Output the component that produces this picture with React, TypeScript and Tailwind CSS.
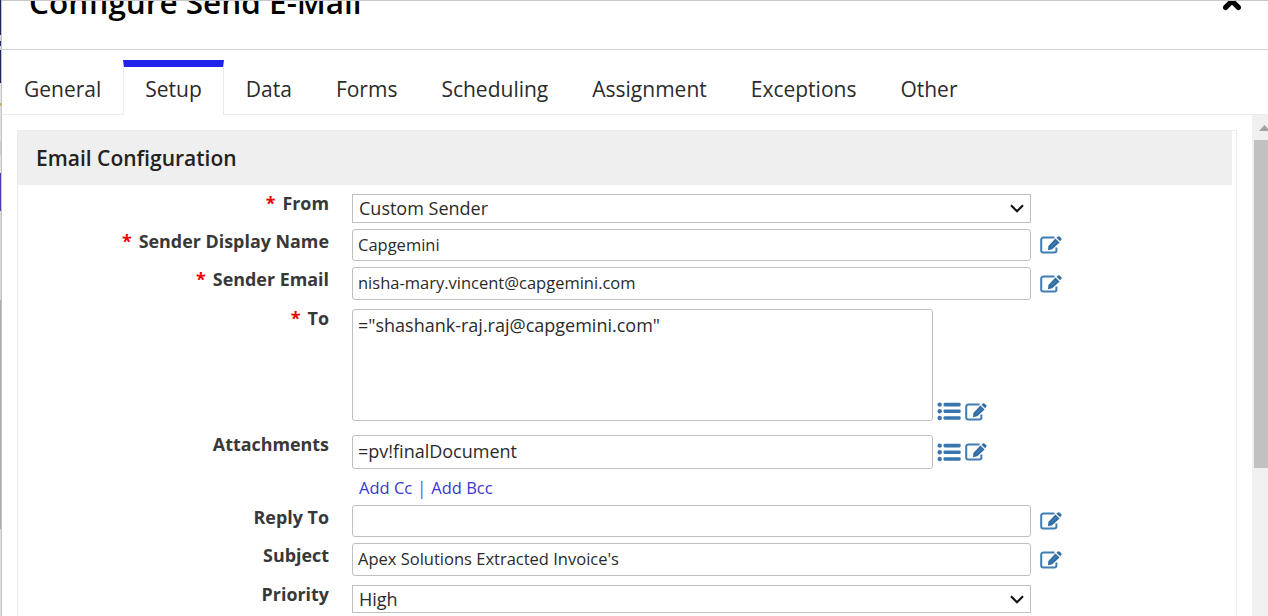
import { useState } from "react";
import type { ReactNode } from "react";
import { clsx } from "clsx";

const TABS = [
  "General",
  "Setup",
  "Data",
  "Forms",
  "Scheduling",
  "Assignment",
  "Exceptions",
  "Other",
];

function EditIcon() {
  return (
    <svg width="22" height="18" viewBox="0 0 22 18" fill="none" className="shrink-0">
      <path
        d="M14.5 1.6H3.2A2 2 0 0 0 1.2 3.6V14.6A2 2 0 0 0 3.2 16.6H14.4A2 2 0 0 0 16.4 14.6V11.5"
        stroke="#3f7db3"
        strokeWidth="2"
      />
      <path d="M15.4 2.6L19.6 6.4L12.2 13.2L8 14.2L8.4 9.9Z" fill="#2f6da3" />
      <path d="M16.4 1.8L18 0.4Q18.8 0 19.4 0.5L21.4 2.2Q21.9 2.8 21.4 3.6L20.3 5.3Z" fill="#2f6da3" />
      <path d="M11.2 10.4L16.4 5.4" stroke="#6b9cc6" strokeWidth="0.7" />
    </svg>
  );
}

function ListIcon() {
  return (
    <svg width="24" height="19" viewBox="0 0 24 19" fill="#3a76ae" className="shrink-0">
      {[2.6, 9.3, 16].map((y) => (
        <g key={y}>
          <circle cx="2.7" cy={y} r="2.2" />
          <rect x="6.5" y={y - 1.8} width="17.2" height="3.6" rx="1.3" />
        </g>
      ))}
    </svg>
  );
}

function Row({
  label,
  required,
  className,
  children,
}: {
  label: string;
  required?: boolean;
  className?: string;
  children: ReactNode;
}) {
  return (
    <div className={clsx("flex items-start", className)}>
      <div className="w-[311px] shrink-0 text-right text-[17.9px] leading-6 font-bold text-[#383838]">
        {required ? <span className="mr-[7px] text-[#f00000]">*</span> : null}
        {label}
      </div>
      <div className="ml-[23px]">{children}</div>
    </div>
  );
}

function SelectBox({ value, className }: { value: string; className?: string }) {
  return (
    <div
      className={clsx(
        "mt-[3px] flex w-[679px] items-center justify-between border border-[#bfbfbf] pr-[6px] pl-[6px] text-[18px] text-[#2b2b2b]",
        className,
      )}
    >
      <span>{value}</span>
      <svg width="14" height="9" viewBox="0 0 14 9" fill="none">
        <path d="M1 1.2L7 7.2L13 1.2" stroke="#111" strokeWidth="2.1" />
      </svg>
    </div>
  );
}

function TextField({
  defaultValue,
  className,
  icons,
}: {
  defaultValue?: string;
  className?: string;
  icons?: ReactNode;
}) {
  return (
    <div className="flex items-center">
      <input
        type="text"
        defaultValue={defaultValue}
        className={clsx(
          "rounded-[3px] border border-[#bfbfbf] bg-white pl-[5px] text-[#2b2b2b] outline-none",
          className,
        )}
      />
      {icons}
    </div>
  );
}

function PickerIcons() {
  return (
    <div className="ml-1 flex items-center gap-1">
      <ListIcon />
      <EditIcon />
    </div>
  );
}

function FieldEdit() {
  return (
    <div className="ml-[9px]">
      <EditIcon />
    </div>
  );
}

// Sliver of the page that stays visible behind the dialog
function PageEdge() {
  return (
    <div className="flex w-px shrink-0 flex-col">
      <div className="h-[35px] bg-[#20235e]" />
      <div className="h-[6px] bg-[#cfd3e0]" />
      <div className="h-[5px] bg-[#20306e]" />
      <div className="h-[4px] bg-[#d5d5dc]" />
      <div className="h-[33px] bg-[#20235e]" />
      <div className="h-[20px] bg-[#e4e4e4]" />
      <div className="h-[3px] bg-[#c9a84a]" />
      <div className="h-[35px] bg-[#e0e0e0]" />
      <div className="h-[14px] bg-[#cccccc]" />
      <div className="h-[18px] bg-[#e0e0e0]" />
      <div className="h-[38px] bg-[#4a3fb5]" />
      <div className="h-[89px] bg-[#d8d8d8]" />
      <div className="h-[229px] bg-[#aaaaaa]" />
      <div className="grow bg-[#dedede]" />
    </div>
  );
}

export default function App() {
  const [active, setActive] = useState("Setup");

  return (
    <div className="flex h-[616px] w-[1268px] overflow-hidden bg-white font-['Open_Sans',sans-serif]">
      <PageEdge />
      <div className="flex min-w-0 grow flex-col border-l border-[#c4c4c4]">
        <header className="flex h-[50px] shrink-0 justify-between overflow-hidden border-t border-b border-t-[#c8c8c8] border-b-[#d0d0d0]">
          <h1 className="-mt-[18px] ml-[27px] text-[31.5px] leading-[38px] font-semibold whitespace-nowrap text-black">
            Configure Send E-Mail
          </h1>
          <svg width="20" height="20" viewBox="0 0 20 20" className="-mt-[10px] mr-[26px] shrink-0">
            <path
              d="M3.6 3.6L16.4 16.4M16.4 3.6L3.6 16.4"
              stroke="#000"
              strokeWidth="5.2"
              strokeLinecap="round"
            />
          </svg>
        </header>

        <nav className="flex h-[65px] shrink-0 pt-[10px]">
          {TABS.map((tab) => (
            <button
              key={tab}
              type="button"
              onClick={() => setActive(tab)}
              className={clsx(
                "shrink-0 text-[21px] text-[#2b2b2b]",
                tab === active
                  ? "border-x border-t-[7px] border-x-[#ebebeb] border-t-[#2222ee] px-[21px] pb-[3px]"
                  : "border-b border-[#ebebeb] px-[22px] pt-[5px]",
              )}
            >
              {tab}
            </button>
          ))}
          <div className="grow border-b border-[#ebebeb]" />
        </nav>

        <div className="flex min-h-0 grow">
          <main className="min-w-0 grow overflow-hidden pt-[15px] pr-[15px] pl-[15px]">
            <section className="h-[600px] border border-[#ebebeb]">
              <h2 className="mr-1 flex h-[54px] items-center bg-[#efefef] pt-[2px] pl-[18px] text-[21px] font-semibold text-[#222]">
                Email Configuration
              </h2>
              <form className="pt-[6px]">
                <Row label="From" required className="h-[38px]">
                  <SelectBox value="Custom Sender" className="h-[29px]" />
                </Row>
                <Row label="Sender Display Name" required className="h-[38px]">
                  <TextField
                    defaultValue="Capgemini"
                    className="h-[32px] w-[679px] pb-[2px] text-[16.5px]"
                    icons={<FieldEdit />}
                  />
                </Row>
                <Row label="Sender Email" required className="h-[39px]">
                  <TextField
                    defaultValue="nisha-mary.vincent@capgemini.com"
                    className="h-[33px] w-[679px] pb-[2px] text-[16.5px]"
                    icons={<FieldEdit />}
                  />
                </Row>
                <Row label="To" required className="h-[126px]">
                  <div className="mt-[3px] flex items-end">
                    <textarea
                      defaultValue={'="shashank-raj.raj@capgemini.com"'}
                      className="h-[112px] w-[581px] resize-none rounded-[3px] border border-[#bfbfbf] pt-[3px] pl-[5px] text-[18px] leading-6 text-[#2b2b2b] outline-none"
                    />
                    <PickerIcons />
                  </div>
                </Row>
                <Row label="Attachments" className="h-[73px]">
                  <div className="mt-[3px]">
                    <TextField
                      defaultValue="=pv!finalDocument"
                      className="h-[34px] w-[581px] pb-[2px] text-[18px]"
                      icons={<PickerIcons />}
                    />
                    <div className="mt-[7px] flex pl-[7px] text-[16.5px] leading-6 text-[#3a36d0]">
                      <a>Add Cc</a>
                      <span className="w-[19px] text-center text-[18px] text-[#3d78c4]">|</span>
                      <a>Add Bcc</a>
                    </div>
                  </div>
                </Row>
                <Row label="Reply To" className="h-[38px]">
                  <TextField className="h-[32px] w-[679px] text-[16.5px]" icons={<FieldEdit />} />
                </Row>
                <Row label="Subject" className="h-[39px]">
                  <TextField
                    defaultValue="Apex Solutions Extracted Invoice's"
                    className="h-[33px] w-[679px] pb-[2px] text-[16.5px]"
                    icons={<FieldEdit />}
                  />
                </Row>
                <Row label="Priority" className="h-[34px]">
                  <SelectBox value="High" className="h-[28px]" />
                </Row>
              </form>
            </section>
          </main>
          <div className="w-4 shrink-0 overflow-hidden bg-[#f0f0f0] pl-[2px]">
            <div className="flex h-[25px] items-start pt-[10px] pl-[5px]">
              <svg width="12" height="6" viewBox="0 0 12 6" className="shrink-0">
                <path d="M0 6L5.5 0L11 6Z" fill="#a3a3a3" />
              </svg>
            </div>
            <div className="h-[328px] bg-[#c1c1c1]" />
          </div>
        </div>
      </div>
    </div>
  );
}
